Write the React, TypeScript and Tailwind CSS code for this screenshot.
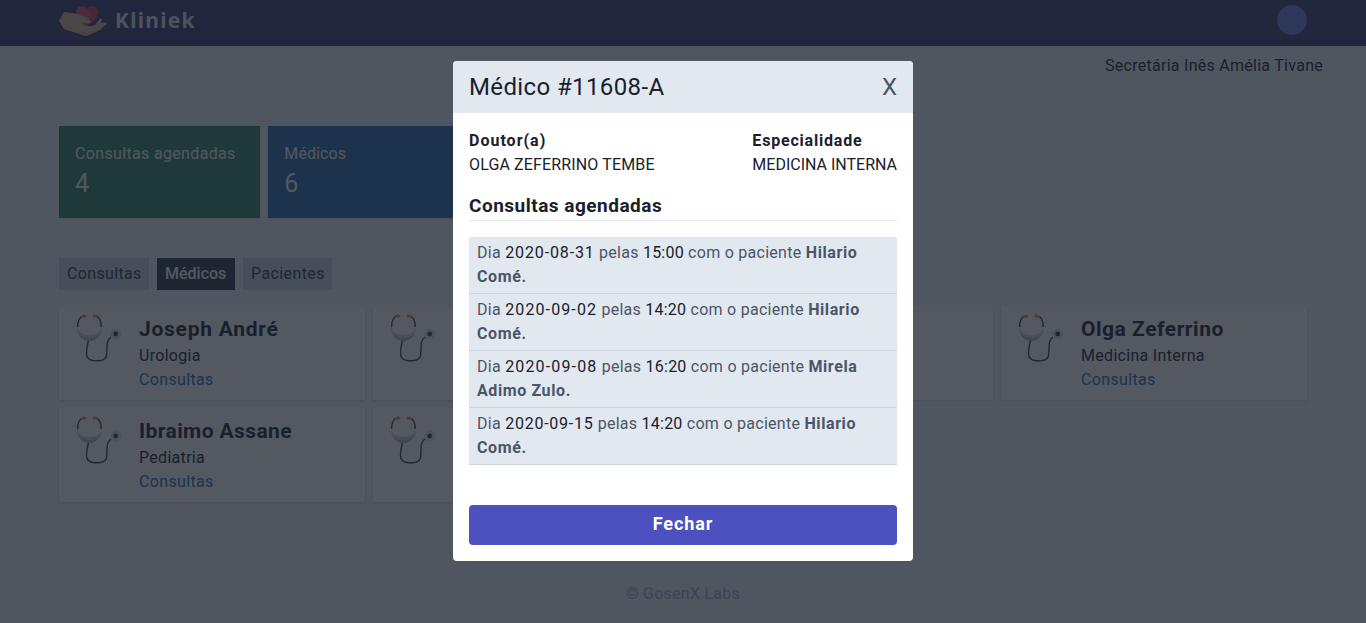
import React from "react";

const stats = [
  { label: "Consultas agendadas", value: 4, color: "bg-[#2f855a]", tracking: "tracking-[0.34px]" },
  { label: "Médicos", value: 6, color: "bg-[#2b6cb0]", tracking: "tracking-[0.1px]" },
];

type Doctor = { id: number; name?: string; area?: string; nameTracking?: string };

const doctors: Doctor[] = [
  { id: 1, name: "Joseph André", area: "Urologia", nameTracking: "tracking-[0.75px]" },
  { id: 2 },
  { id: 3 },
  { id: 4, name: "Olga Zeferrino", area: "Medicina Interna", nameTracking: "tracking-[0.52px]" },
  { id: 5, name: "Ibraimo Assane", area: "Pediatria", nameTracking: "tracking-[0.4px]" },
  { id: 6 },
];

const appointments = [
  { date: "2020-08-31", time: "15:00", patient: "Hilario Comé", dateTracking: "tracking-[0.88px]" },
  { date: "2020-09-02", time: "14:20", patient: "Hilario Comé", dateTracking: "tracking-[1.12px]" },
  { date: "2020-09-08", time: "16:20", patient: "Mirela Adimo Zulo", dateTracking: "tracking-[1.15px]" },
  { date: "2020-09-15", time: "14:20", patient: "Hilario Comé", dateTracking: "tracking-[0.75px]" },
];

function Logo() {
  return (
    <svg width="48" height="32" viewBox="0 0 48 32" className="shrink-0">
      <path d="M27 21C20 15 17 11 17 7c0-6 8-8 11-3 3-5 11-3 11 3 0 5-5 10-12 14z" fill="#e8505f" />
      <path d="M28 4c3-5 11-3 11 3 0 5-5 10-12 14 5-6 6-11 1-17z" fill="#cc4356" />
      <path d="M0 15.7 5 7l11 1.5 8 2.5c4 1.500 7 3.500 8.300 5.700-1.300 2.500-5 1.500-9.300.8 2 4 8 5 13 2.500l4-5.300c1.500-2 3.500-1 2.500 1l-.8 2.300c3-.8 5.500-.5 6.300 1-3 2-5 4.500-8 6.700L27 31 5 24z" fill="#dcb898" />
      <path d="M5 24 3.500 21.500 13 25l14 3.500 12.500-4L27 31z" fill="#cfa88a" />
    </svg>
  );
}

function Stethoscope() {
  return (
    <svg width="48" height="48" viewBox="0 0 48 48" fill="none" className="shrink-0 overflow-visible">
      <path d="M8.500 1.700C4.500 3 2.500 7.500 2.700 13M20.300 1.700c4 1.300 6 5.800 5.800 11.300" stroke="#3a3f55" strokeWidth="1.4" />
      <path d="M13.500 26.500c-1 4-2 8-2 12.500 0 5 2 7.700 8 7.700h4.500c6 0 7.800-2.700 7.800-7.700l.3-8c.1-3.500 1.400-6 3.900-8" stroke="#3a3f55" strokeWidth="1.400" />
      <path d="M2 12.500c1 5.500 5 8.500 12.400 8.500S25.800 18 26.800 12.500c.5 8-4.200 14.200-12.400 14.200S1.500 20.500 2 12.500z" fill="#d4d6da" />
      <path d="M4 20.500c5 4.500 15.500 4.500 20.800 0-2 4-5.800 6.500-10.400 6.500S6 24.500 4 20.500z" fill="#b8bbc1" />
      <path d="m6.500 2.800 2-2.200 2.300.4v2l-3 .8zM22.300 2.800l-2-2.200L18 1v2l3 .8z" fill="#eaa22f" stroke="#eaa22f" strokeWidth=".6" strokeLinejoin="round" />
      <circle cx="40.700" cy="20" r="5.500" fill="#e3e4e8" />
      <circle cx="40.700" cy="20" r="2.400" fill="#353a50" />
    </svg>
  );
}

function Tab({ children, active, size }: { children: string; active?: boolean; size: string }) {
  return (
    <button className={`h-8 whitespace-nowrap px-2 text-left ${size} ${active ? "bg-[#2d3748] font-medium text-white" : "bg-[#cbd5e0] text-[#2d3748]"}`}>
      {children}
    </button>
  );
}

function DoctorCard({ name, area, nameTracking }: Doctor) {
  return (
    <article className="flex h-[94px] gap-4 bg-white px-4 py-2 shadow-[0_1px_3px_rgba(0,0,0,0.1),0_1px_2px_rgba(0,0,0,0.06)]">
      <Stethoscope />
      {name && (
        <div>
          <h3 className={`text-[21px] leading-[30px] font-bold ${nameTracking}`}>{name}</h3>
          <p className="tracking-[0.3px]">{area}</p>
          <a className="text-[#2b6cb0] tracking-[0.35px]">Consultas</a>
        </div>
      )}
    </article>
  );
}

function Modal() {
  return (
    <section className="w-[460px] overflow-hidden rounded bg-white">
      <header className="flex items-center justify-between bg-[#e2e8f0] px-4 py-2 text-2xl leading-9">
        <h2 className="tracking-[0.38px]">Médico #11608-A</h2>
        <button className="text-[#4a5568]">X</button>
      </header>
      <div className="p-4">
        <div className="flex justify-between">
          <div>
            <p className="font-bold tracking-[1px]">Doutor(a)</p>
            <p className="tracking-[0.14px]">OLGA ZEFERRINO TEMBE</p>
          </div>
          <div>
            <p className="font-bold tracking-[0.8px]">Especialidade</p>
            <p>MEDICINA INTERNA</p>
          </div>
        </div>
        <h3 className="mt-4 h-7 border-b border-[#e2e8f0] text-[19px] leading-[26px] font-bold tracking-[0.5px]">Consultas agendadas</h3>
        <ul className="mt-4">
          {appointments.map((a) => (
            <li key={a.date} className="border-b border-[#cbd5e0] bg-[#e2e8f0] px-2 py-1 text-[#4a5568] tracking-[0.27px]">
              Dia <span className={`text-[#1a202c] ${a.dateTracking}`}>{a.date}</span> pelas{" "}
              <span className="text-[#1a202c] tracking-[0.22px]">{a.time}</span> com o paciente{" "}
              <b className="tracking-[0.6px]">{a.patient}.</b>
            </li>
          ))}
        </ul>
        <button className="mt-10 h-10 w-full rounded bg-[#4c51bf] pb-0.5 text-lg font-bold text-white tracking-[0.9px]">Fechar</button>
      </div>
    </section>
  );
}

export default function App() {
  return (
    <div className="relative h-[623px] overflow-hidden bg-[#eff8fc] text-base leading-6 text-[#1a202c] font-['Roboto',sans-serif]">
      <header className="flex h-[46px] items-start justify-between bg-[#3a386b] pr-[59px] pl-[59px]">
        <div className="flex items-start gap-2 pt-[5px]">
          <Logo />
          <span className="text-[21px] leading-[30px] font-bold text-[#e2e8f0] tracking-[1.25px] font-['Noto_Sans',sans-serif]">Kliniek</span>
        </div>
        <span className="mt-[5px] size-[30px] rounded-full bg-[#6a7be0]" />
      </header>
      <p className="mt-2 pr-[43px] text-right tracking-[0.27px]">Secretária Inês Amélia Tivane</p>
      <main className="mx-[59px] mt-12">
        <div className="grid grid-cols-6 gap-2">
          {stats.map((s) => (
            <div key={s.label} className={`h-[92px] px-4 pt-4 text-[#f7fafc] shadow-[0_1px_3px_rgba(0,0,0,0.1)] ${s.color}`}>
              <p className={`whitespace-nowrap ${s.tracking}`}>{s.label}</p>
              <p className="text-[25px] leading-9">{s.value}</p>
            </div>
          ))}
        </div>
        <nav className="mt-10 flex gap-2">
          <Tab size="w-[90px] tracking-[0.34px]">Consultas</Tab>
          <Tab active size="w-[78px] tracking-[0px]">Médicos</Tab>
          <Tab size="w-[89px] tracking-[0.4px]">Pacientes</Tab>
        </nav>
        <div className="mt-4 grid grid-cols-4 gap-2">
          {doctors.map((d) => (
            <DoctorCard key={d.id} {...d} />
          ))}
        </div>
      </main>
      <footer className="mt-20 text-center text-[#a0aec0] tracking-[0.25px]">© GosenX Labs</footer>
      <div className="absolute inset-0 flex items-center justify-center bg-[#1a202c]/75 pb-px">
        <Modal />
      </div>
    </div>
  );
}
